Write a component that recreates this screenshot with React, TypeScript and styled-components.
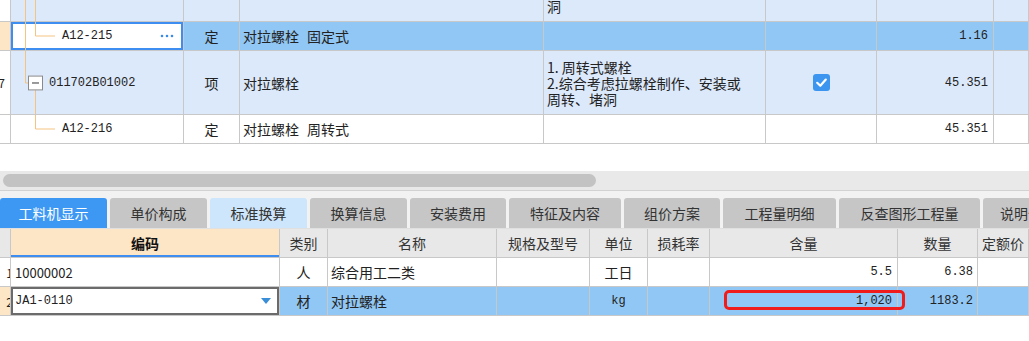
import styled, { createGlobalStyle } from "styled-components";

const GlobalStyle = createGlobalStyle`
  html, body {
    margin: 0;
    padding: 0;
    background: #ffffff;
  }
  body {
    width: 1029px;
    height: 341px;
    overflow: hidden;
    font-family: "Noto Sans CJK SC", "Noto Sans", sans-serif;
    font-size: 14px;
    color: #222;
  }
`;

type Tone = "plain" | "soft" | "hot" | "orange" | "head";
type Align = "left" | "center" | "right";

const toneBg: Record<Tone, string> = {
  plain: "#ffffff",
  soft: "#dce9fb",
  hot: "#91c7f4",
  orange: "#fde6c6",
  head: "#e8e8e8",
};

const justify: Record<Align, string> = {
  left: "flex-start",
  center: "center",
  right: "flex-end",
};

const Page = styled.div`
  display: flex;
  flex-direction: column;
  width: 1029px;
  height: 341px;
  overflow: hidden;
`;

const Row = styled.div<{ $cols: string; $h: number }>`
  display: grid;
  grid-template-columns: ${({ $cols }) => $cols};
  height: ${({ $h }) => $h}px;
`;

const Cell = styled.div<{
  $tone?: Tone;
  $align?: Align;
  $mono?: boolean;
  $pad?: string;
}>`
  position: relative;
  box-sizing: border-box;
  display: flex;
  align-items: center;
  justify-content: ${({ $align = "left" }) => justify[$align]};
  padding: ${({ $pad = "0 4px" }) => $pad};
  border-right: 1px solid #c8c8c8;
  border-bottom: 1px solid #c8c8c8;
  background: ${({ $tone = "plain" }) => toneBg[$tone]};
  overflow: hidden;
  white-space: nowrap;
  font-family: ${({ $mono }) =>
    $mono
      ? `"Liberation Mono", "Noto Sans CJK SC", monospace`
      : `"Noto Sans CJK SC", "Noto Sans", sans-serif`};
  font-size: ${({ $mono }) => ($mono ? "12px" : "14px")};
  color: #222;
`;

const RowNo = styled(Cell)`
  justify-content: flex-end;
  padding: 0 5px 0 0;
  font-size: 12px;
`;

const ClippedNo = styled.span`
  margin-right: -8px;
`;

const TailLine = styled(Cell)`
  align-items: flex-end;
  padding: 0 3px 5px;
`;

const Wrapped = styled(Cell)`
  flex-direction: column;
  align-items: flex-start;
  justify-content: center;
  line-height: 16px;
  padding: 0 3px;
`;

const Line = styled.span`
  display: block;
  white-space: nowrap;
`;

const Gap = styled.span`
  display: inline-block;
  width: 8px;
`;

const EditCell = styled(Cell)`
  box-shadow: inset 0 0 0 2px #3d8ef0;
`;

const ComboCell = styled(Cell)`
  box-shadow: inset 0 0 0 2px #6b6b6b;
  justify-content: space-between;
  padding: 0 8px 0 4px;
`;

const CodeText = styled.span<{ $indent: number }>`
  margin-left: ${({ $indent }) => $indent}px;
`;

const Guide = styled.svg`
  position: absolute;
  left: 0;
  top: 0;
  width: 50px;
  height: 100%;
  overflow: visible;
`;

const Dots = styled.svg`
  position: absolute;
  right: 9px;
  top: 50%;
  margin-top: -2px;
  width: 14px;
  height: 4px;
`;

const Check = styled.svg`
  width: 17px;
  height: 17px;
`;

const Caret = styled.svg`
  width: 10px;
  height: 6px;
`;

const Spacer = styled.div`
  height: 27px;
`;

const Track = styled.div`
  box-sizing: border-box;
  height: 20px;
  padding: 3px 3px;
  background: #e9e9e9;
  border-bottom: 1px solid #d2d2d2;
`;

const Thumb = styled.div`
  width: 593px;
  height: 13px;
  border-radius: 7px;
  background: #c3c3c3;
`;

const TabBar = styled.div`
  box-sizing: border-box;
  display: flex;
  align-items: flex-end;
  gap: 3px;
  height: 38px;
  padding-top: 7px;
  background: #f2f2f2;
  border-bottom: 1px solid #e0e0e0;
  overflow: hidden;
`;

type TabKind = "active" | "muted" | "light";

const Tab = styled.div<{ $kind: TabKind; $w: number }>`
  flex: none;
  width: ${({ $w }) => $w}px;
  height: 30px;
  display: flex;
  align-items: center;
  justify-content: center;
  border-radius: 3px 3px 0 0;
  font-size: 14px;
  white-space: nowrap;
  overflow: hidden;
  background: ${({ $kind }) =>
    $kind === "active" ? "#3d98f4" : $kind === "light" ? "#cde6fc" : "#c6c6c6"};
  color: ${({ $kind }) => ($kind === "active" ? "#ffffff" : "#333")};
`;

const HeadCell = styled(Cell)`
  justify-content: center;
  color: #333;
`;

const KeyHead = styled(HeadCell)`
  font-weight: 700;
  color: #111;
  box-shadow: inset 0 -2px 0 #3d8ef0;
`;

const SmallCode = styled(Cell)`
  font-size: 13px;
`;

const MarkedCell = styled(Cell)`
  overflow: visible;
`;

const Marker = styled.div`
  position: absolute;
  left: 14px;
  top: 3px;
  width: 181px;
  height: 20px;
  box-sizing: border-box;
  border: 3px solid #f01c1c;
  border-radius: 5px;
  z-index: 2;
`;

const ValueText = styled.span`
  position: relative;
  z-index: 3;
`;

const topCols = "11px 173px 56px 304px 222px 111px 117px 35px";
const bottomCols = "11px 269px 48px 169px 93px 58px 62px 188px 80px 51px";

const LINE = "#f5c27f";

type GuideKind = "pass" | "end" | "parent" | "endDeep";

const TreeGuide = ({ kind, h }: { kind: GuideKind; h: number }) => {
  const mid = Math.floor(h / 2) + 0.5;
  return (
    <Guide viewBox={`0 0 50 ${h}`} preserveAspectRatio="none" shapeRendering="crispEdges">
      {kind === "pass" && (
        <>
          <line x1="14.5" y1="0" x2="14.5" y2={h} stroke={LINE} />
          <line x1="24.5" y1="0" x2="24.5" y2={h} stroke={LINE} />
        </>
      )}
      {kind === "end" && (
        <>
          <line x1="14.5" y1="0" x2="14.5" y2={h} stroke={LINE} />
          <line x1="24.5" y1="0" x2="24.5" y2={mid} stroke={LINE} />
          <line x1="24.5" y1={mid} x2="44" y2={mid} stroke={LINE} />
        </>
      )}
      {kind === "parent" && (
        <>
          <line x1="14.5" y1="0" x2="14.5" y2={mid} stroke={LINE} />
          <line x1="14.5" y1={mid} x2="17" y2={mid} stroke={LINE} />
          <line x1="24.5" y1={mid + 7} x2="24.5" y2={h} stroke={LINE} />
          <rect x="17.5" y={mid - 7} width="14" height="14" fill="#fff" stroke="#8a8a8a" />
          <line x1="21" y1={mid} x2="28" y2={mid} stroke="#333" />
        </>
      )}
      {kind === "endDeep" && (
        <>
          <line x1="24.5" y1="0" x2="24.5" y2={mid} stroke={LINE} />
          <line x1="24.5" y1={mid} x2="44" y2={mid} stroke={LINE} />
        </>
      )}
    </Guide>
  );
};

const tabs: { label: string; kind: TabKind; w: number }[] = [
  { label: "工料机显示", kind: "active", w: 107 },
  { label: "单价构成", kind: "muted", w: 97 },
  { label: "标准换算", kind: "light", w: 97 },
  { label: "换算信息", kind: "muted", w: 97 },
  { label: "安装费用", kind: "muted", w: 96 },
  { label: "特征及内容", kind: "muted", w: 112 },
  { label: "组价方案", kind: "muted", w: 96 },
  { label: "工程量明细", kind: "muted", w: 113 },
  { label: "反查图形工程量", kind: "muted", w: 141 },
  { label: "说明信息", kind: "muted", w: 90 },
];

export default function App() {
  return (
    <Page>
      <GlobalStyle />

      {/* upper list: 清单 / 定额 tree */}
      <Row $cols={topCols} $h={22}>
        <RowNo $tone="plain" />
        <Cell $tone="soft">
          <TreeGuide kind="pass" h={22} />
        </Cell>
        <Cell $tone="soft" />
        <Cell $tone="soft" />
        <TailLine $tone="soft">洞</TailLine>
        <Cell $tone="soft" />
        <Cell $tone="soft" />
        <Cell $tone="soft" />
      </Row>

      <Row $cols={topCols} $h={29}>
        <RowNo $tone="orange" />
        <EditCell $tone="plain" $mono>
          <TreeGuide kind="end" h={29} />
          <CodeText $indent={47}>A12-215</CodeText>
          <Dots viewBox="0 0 14 4">
            <circle cx="2" cy="2" r="1.3" fill="#3b8be6" />
            <circle cx="7" cy="2" r="1.3" fill="#3b8be6" />
            <circle cx="12" cy="2" r="1.3" fill="#3b8be6" />
          </Dots>
        </EditCell>
        <Cell $tone="hot" $align="center">定</Cell>
        <Cell $tone="hot" $pad="0 3px">
          对拉螺栓<Gap />固定式
        </Cell>
        <Cell $tone="hot" />
        <Cell $tone="hot" />
        <Cell $tone="hot" $align="right" $mono $pad="0 5px">1.16</Cell>
        <Cell $tone="hot" />
      </Row>

      <Row $cols={topCols} $h={64}>
        <RowNo $tone="plain">17</RowNo>
        <Cell $tone="soft" $mono>
          <TreeGuide kind="parent" h={64} />
          <CodeText $indent={34}>011702B01002</CodeText>
        </Cell>
        <Cell $tone="soft" $align="center">项</Cell>
        <Cell $tone="soft" $pad="0 3px">对拉螺栓</Cell>
        <Wrapped $tone="soft">
          <Line>1. 周转式螺栓</Line>
          <Line>2.综合考虑拉螺栓制作、安装或</Line>
          <Line>周转、堵洞</Line>
        </Wrapped>
        <Cell $tone="soft" $align="center">
          <Check viewBox="0 0 17 17">
            <rect x="0" y="0" width="17" height="17" rx="3" fill="#3c96f0" />
            <path
              d="M4.2 8.8 L7.3 11.8 L12.8 5.6"
              fill="none"
              stroke="#fff"
              strokeWidth="2.2"
              strokeLinecap="round"
              strokeLinejoin="round"
            />
          </Check>
        </Cell>
        <Cell $tone="soft" $align="right" $mono $pad="0 5px">45.351</Cell>
        <Cell $tone="soft" />
      </Row>

      <Row $cols={topCols} $h={29}>
        <RowNo $tone="plain" />
        <Cell $tone="plain" $mono>
          <TreeGuide kind="endDeep" h={29} />
          <CodeText $indent={47}>A12-216</CodeText>
        </Cell>
        <Cell $tone="plain" $align="center">定</Cell>
        <Cell $tone="plain" $pad="0 3px">
          对拉螺栓<Gap />周转式
        </Cell>
        <Cell $tone="plain" />
        <Cell $tone="plain" />
        <Cell $tone="plain" $align="right" $mono $pad="0 5px">45.351</Cell>
        <Cell $tone="plain" />
      </Row>

      <Spacer />
      <Track>
        <Thumb />
      </Track>

      <TabBar>
        {tabs.map((t) => (
          <Tab key={t.label} $kind={t.kind} $w={t.w}>
            {t.label}
          </Tab>
        ))}
      </TabBar>

      {/* lower list: 工料机 */}
      <Row $cols={bottomCols} $h={29}>
        <HeadCell $tone="head" />
        <KeyHead $tone="orange">编码</KeyHead>
        <HeadCell $tone="head">类别</HeadCell>
        <HeadCell $tone="head">名称</HeadCell>
        <HeadCell $tone="head">规格及型号</HeadCell>
        <HeadCell $tone="head">单位</HeadCell>
        <HeadCell $tone="head">损耗率</HeadCell>
        <HeadCell $tone="head">含量</HeadCell>
        <HeadCell $tone="head">数量</HeadCell>
        <HeadCell $tone="head" $align="left">定额价</HeadCell>
      </Row>

      <Row $cols={bottomCols} $h={29}>
        <RowNo $tone="plain" $pad="0">
          <ClippedNo>1</ClippedNo>
        </RowNo>
        <SmallCode $tone="plain">10000002</SmallCode>
        <Cell $tone="plain" $align="center">人</Cell>
        <Cell $tone="plain" $pad="0 3px">综合用工二类</Cell>
        <Cell $tone="plain" />
        <Cell $tone="plain" $align="center">工日</Cell>
        <Cell $tone="plain" />
        <Cell $tone="plain" $align="right" $mono $pad="0 5px">5.5</Cell>
        <Cell $tone="plain" $align="right" $mono $pad="0 4px">6.38</Cell>
        <Cell $tone="plain" />
      </Row>

      <Row $cols={bottomCols} $h={29}>
        <RowNo $tone="orange" $pad="0">
          <ClippedNo>2</ClippedNo>
        </RowNo>
        <ComboCell $tone="plain" $mono>
          <span>JA1-0110</span>
          <Caret viewBox="0 0 10 6">
            <path d="M0 0 L10 0 L5 6 Z" fill="#3a8ed8" />
          </Caret>
        </ComboCell>
        <Cell $tone="hot" $align="center">材</Cell>
        <Cell $tone="hot" $pad="0 3px">对拉螺栓</Cell>
        <Cell $tone="hot" />
        <Cell $tone="hot" $align="center" $mono>kg</Cell>
        <Cell $tone="hot" />
        <MarkedCell $tone="hot" $align="right" $mono $pad="0 5px">
          <Marker />
          <ValueText>1,020</ValueText>
        </MarkedCell>
        <Cell $tone="hot" $align="right" $mono $pad="0 4px">1183.2</Cell>
        <Cell $tone="hot" />
      </Row>
    </Page>
  );
}
